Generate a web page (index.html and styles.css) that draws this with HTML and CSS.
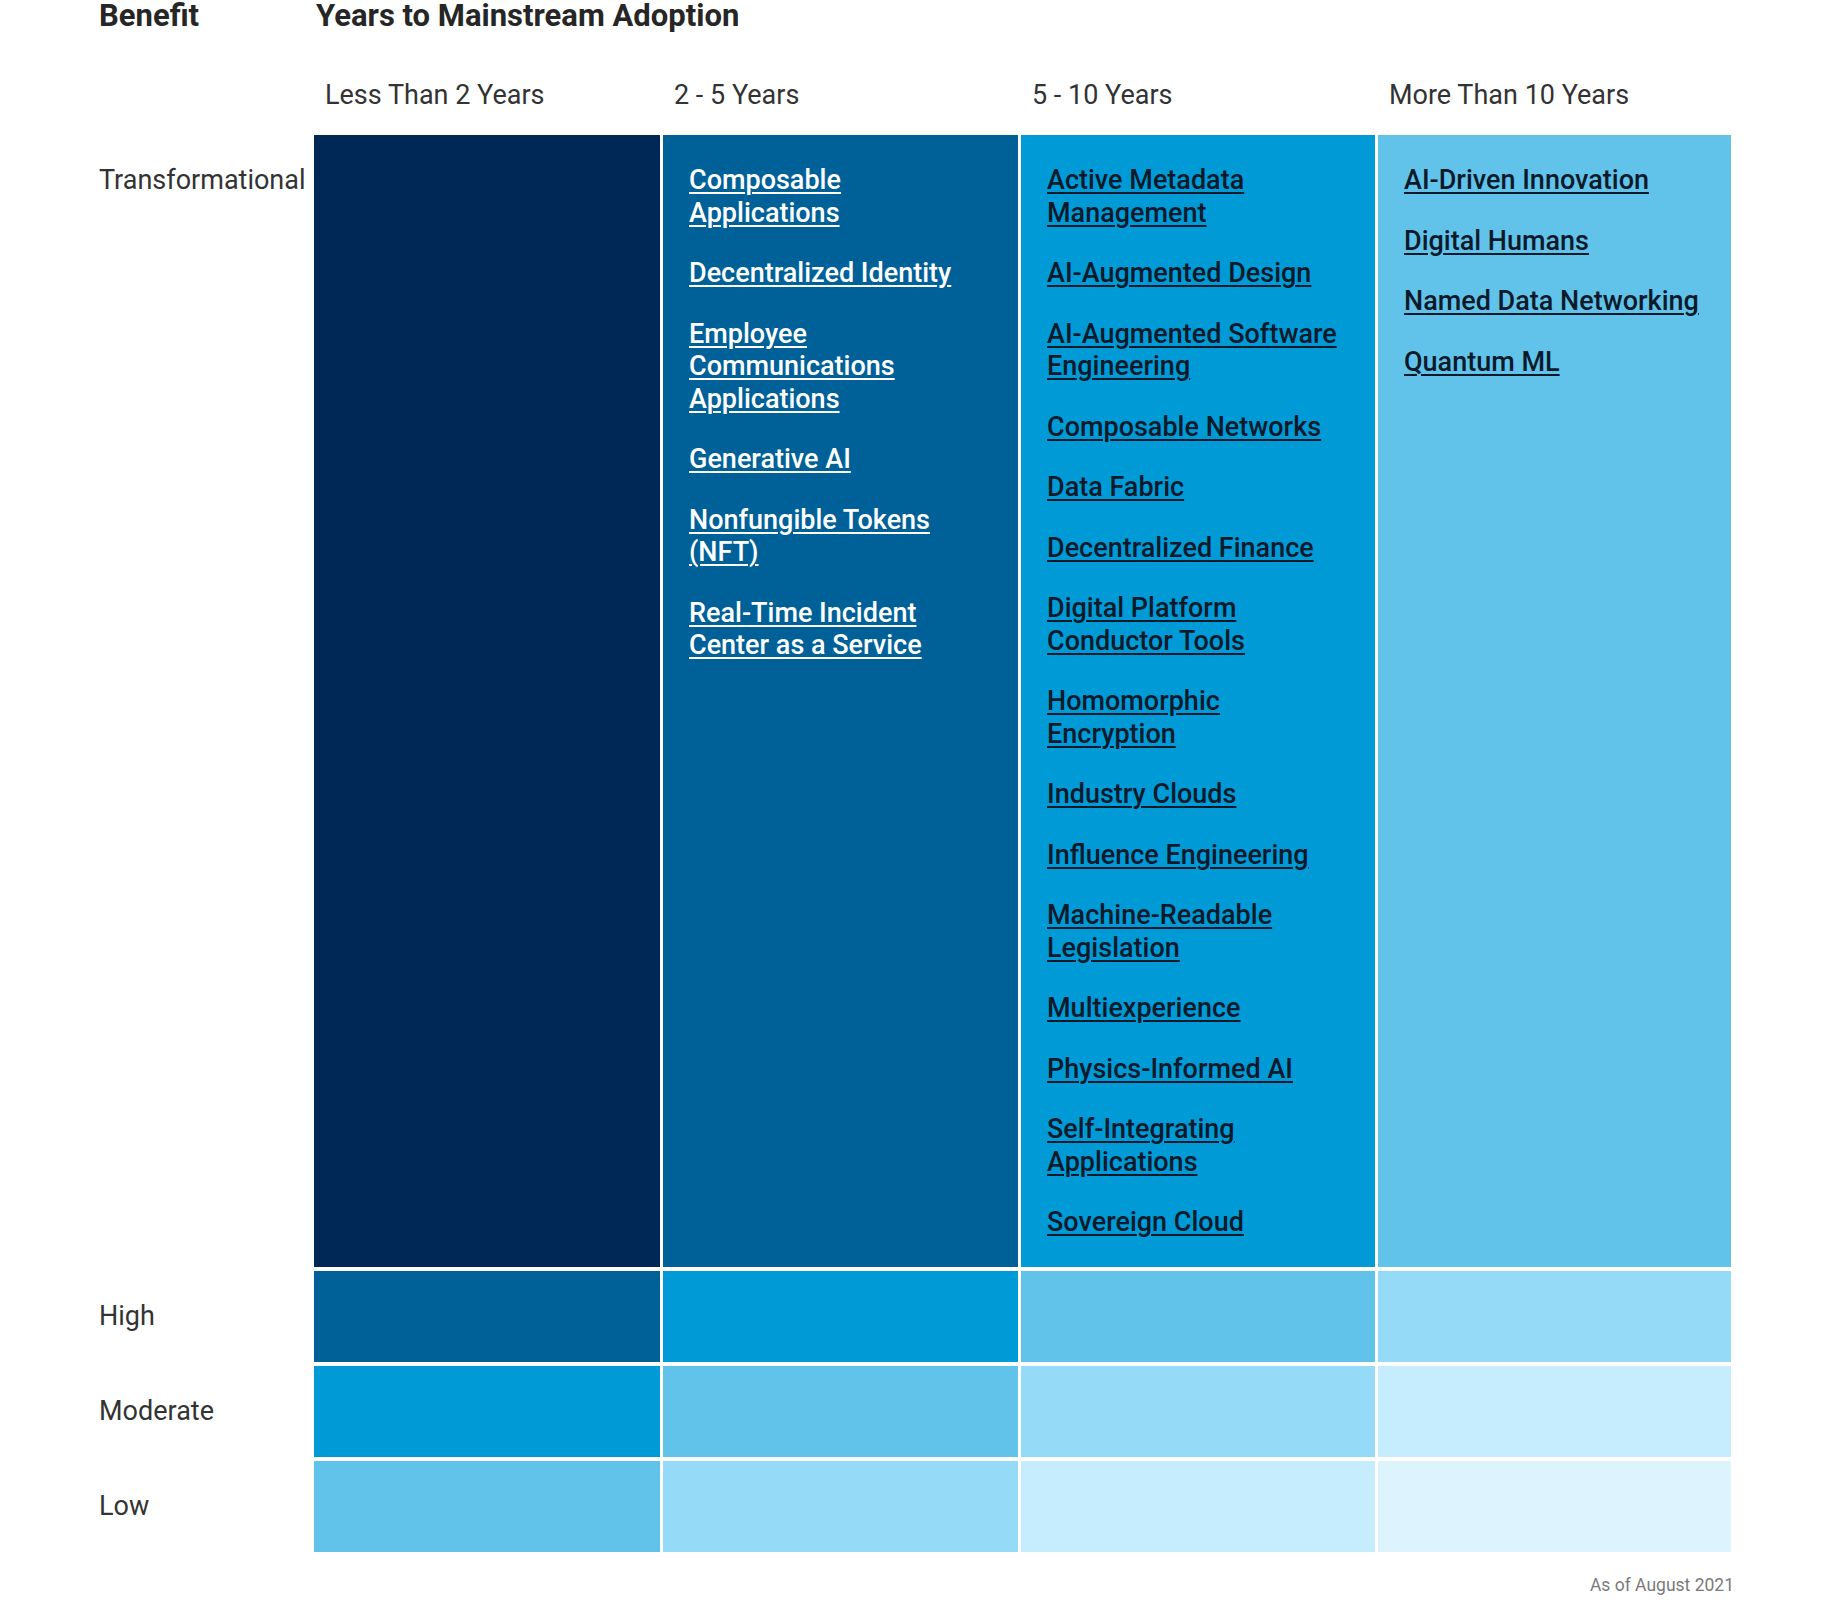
FILE: index.html
```html
<!DOCTYPE html>
<html lang="en">
<head>
<meta charset="utf-8">
<title>Years to Mainstream Adoption</title>
<link rel="stylesheet" href="styles.css">
</head>
<body>
<div class="page">
  <div class="title-row">
    <div class="title">Benefit</div>
    <div class="title title-years">Years to Mainstream Adoption</div>
  </div>

  <div class="head-row">
    <div></div>
    <div class="col-head">Less Than 2 Years</div>
    <div class="col-head">2 - 5 Years</div>
    <div class="col-head">5 - 10 Years</div>
    <div class="col-head">More Than 10 Years</div>
  </div>

  <div class="matrix">
    <div class="row-label row-label-top">Transformational</div>
    <div class="cell shade-1"></div>
    <div class="cell shade-2">
      <ul class="links links-light">
        <li><a href="#">Composable Applications</a></li>
        <li><a href="#">Decentralized Identity</a></li>
        <li><a href="#">Employee Communications Applications</a></li>
        <li><a href="#">Generative AI</a></li>
        <li><a href="#">Nonfungible Tokens (NFT)</a></li>
        <li><a href="#">Real-Time Incident Center as a Service</a></li>
      </ul>
    </div>
    <div class="cell shade-3">
      <ul class="links">
        <li><a href="#">Active Metadata Management</a></li>
        <li><a href="#">AI-Augmented Design</a></li>
        <li><a href="#">AI-Augmented Software Engineering</a></li>
        <li><a href="#">Composable Networks</a></li>
        <li><a href="#">Data Fabric</a></li>
        <li><a href="#">Decentralized Finance</a></li>
        <li><a href="#">Digital Platform Conductor Tools</a></li>
        <li><a href="#">Homomorphic Encryption</a></li>
        <li><a href="#">Industry Clouds</a></li>
        <li><a href="#">Influence Engineering</a></li>
        <li><a href="#">Machine-Readable Legislation</a></li>
        <li><a href="#">Multiexperience</a></li>
        <li><a href="#">Physics-Informed AI</a></li>
        <li><a href="#">Self-Integrating Applications</a></li>
        <li><a href="#">Sovereign Cloud</a></li>
      </ul>
    </div>
    <div class="cell shade-4">
      <ul class="links">
        <li><a href="#">AI-Driven Innovation</a></li>
        <li><a href="#">Digital Humans</a></li>
        <li><a href="#">Named Data Networking</a></li>
        <li><a href="#">Quantum ML</a></li>
      </ul>
    </div>

    <div class="row-label">High</div>
    <div class="cell shade-2"></div>
    <div class="cell shade-3"></div>
    <div class="cell shade-4"></div>
    <div class="cell shade-5"></div>

    <div class="row-label">Moderate</div>
    <div class="cell shade-3"></div>
    <div class="cell shade-4"></div>
    <div class="cell shade-5"></div>
    <div class="cell shade-6"></div>

    <div class="row-label">Low</div>
    <div class="cell shade-4"></div>
    <div class="cell shade-5"></div>
    <div class="cell shade-6"></div>
    <div class="cell shade-7"></div>
  </div>

  <div class="note">As of August 2021</div>
</div>
</body>
</html>
```

FILE: styles.css
```css
html, body {
  margin: 0;
  padding: 0;
  background: #ffffff;
}

body {
  font-family: Roboto, "Liberation Sans", Arial, sans-serif;
  color: #333333;
}

.page {
  width: 1632px;
  padding-left: 99px;
}

.title-row {
  display: grid;
  grid-template-columns: 217px auto;
  height: 79px;
}

.title {
  font-size: 31px;
  font-weight: 700;
  line-height: 32px;
  color: #262626;
}

.head-row,
.matrix {
  display: grid;
  grid-template-columns: 212px 346px 355px 354px 353px;
  column-gap: 3px;
}

.head-row {
  height: 56px;
}

.col-head {
  padding-left: 11px;
  font-size: 27px;
  line-height: 32.5px;
  color: #333333;
}

.matrix {
  grid-template-rows: 1132px 91px 91px 91px;
  row-gap: 4px;
}

.row-label {
  display: flex;
  align-items: center;
  font-size: 27px;
  line-height: 32.5px;
  color: #333333;
}

.row-label-top {
  align-items: flex-start;
  padding-top: 29px;
}

.shade-1 { background: #002856; }
.shade-2 { background: #006198; }
.shade-3 { background: #009ad7; }
.shade-4 { background: #62c3ea; }
.shade-5 { background: #95dbf8; }
.shade-6 { background: #c5edfd; }
.shade-7 { background: #ddf3fd; }

.links {
  list-style: none;
  margin: 0;
  padding: 29px 26px 0 26px;
  font-size: 27px;
  font-weight: 500;
  line-height: 32.5px;
}

.links li + li {
  margin-top: 28px;
}

.links a {
  color: #0b1a2b;
  text-decoration: underline;
  text-decoration-thickness: 2px;
  text-underline-offset: 3px;
}

.links-light a {
  color: #ffffff;
}

.note {
  margin-top: 23px;
  margin-right: -3px;
  text-align: right;
  font-size: 17.5px;
  color: #7a7a7a;
}
```
